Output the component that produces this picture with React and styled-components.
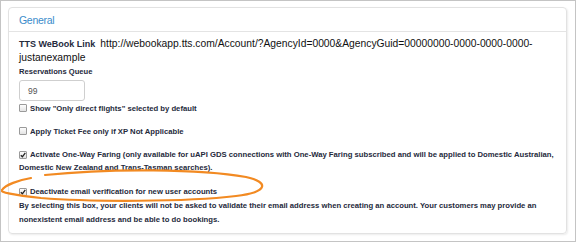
import React from 'react'
import styled, { createGlobalStyle } from 'styled-components'

const GlobalStyle = createGlobalStyle`
  html, body {
    margin: 0;
    padding: 0;
    background: #fff;
  }
  body {
    font-family: "Liberation Sans", Arial, sans-serif;
  }
`

const Frame = styled.div`
  position: relative;
  width: 576px;
  height: 242px;
  box-sizing: border-box;
  border: 1px solid #c4c4c4;
  padding: 6px 8px 7px 7px;
  overflow: hidden;
`

const Panel = styled.div`
  height: 100%;
  box-sizing: border-box;
  border: 1px solid #e2e2e2;
  border-radius: 4px;
  box-shadow: 1px 1px 2px rgba(0, 0, 0, 0.08);
  display: flex;
  flex-direction: column;
`

const Heading = styled.div`
  height: 24px;
  box-sizing: border-box;
  border-bottom: 1px solid #e4e4e4;
  padding-left: 10px;
  display: flex;
  align-items: center;
  color: #3a8ccb;
  font-size: 10.5px;
  letter-spacing: -0.3px;
`

const Body = styled.div`
  padding: 5px 3px 0 10px;
  color: #252a3c;
`

const LinkRow = styled.div`
  font-size: 10.3px;
  line-height: 13px;
  color: #111;
  width: 520px;
`

const LinkLabel = styled.b`
  font-size: 9px;
  color: #252a3c;
  margin-right: 5px;
`

const FieldLabel = styled.div`
  font-weight: bold;
  font-size: 7.6px;
  line-height: 12px;
  margin-top: 2px;
`

const Input = styled.div`
  width: 66px;
  height: 21px;
  box-sizing: border-box;
  margin-top: 2px;
  border: 1px solid #cfcfcf;
  border-radius: 3px;
  padding-left: 8px;
  display: flex;
  align-items: center;
  font-size: 8.5px;
  color: #555;
`

const CheckRow = styled.div`
  margin-top: ${p => p.gap}px;
  font-weight: bold;
  font-size: 7.7px;
  line-height: 13px;
`

const Box = styled.span`
  display: inline-flex;
  vertical-align: -1px;
  width: 8px;
  height: 8px;
  margin-right: 3px;
  box-sizing: border-box;
  border: 1px solid #9a9a9a;
  border-radius: 1px;
  background: linear-gradient(#fdfdfd, #e3e3e3);
  align-items: center;
  justify-content: center;
`

const Note = styled.div`
  font-weight: bold;
  font-size: 7.7px;
  line-height: 14px;
  margin-top: 1px;
  padding-right: 14px;
`

const Scribble = styled.svg`
  position: absolute;
  left: 0;
  top: 164px;
  pointer-events: none;
`

const Checkbox = ({ checked }) => (
  <Box>
    {checked && (
      <svg width="6" height="6" viewBox="0 0 6 6">
        <path d="M0.8 3.2 L2.4 4.8 L5.3 0.9" fill="none" stroke="#222" strokeWidth="1.3" />
      </svg>
    )}
  </Box>
)

const App = () => (
  <>
    <GlobalStyle />
    <Frame>
      <Panel>
        <Heading>General</Heading>
        <Body>
          <LinkRow>
            <LinkLabel>TTS WeBook Link</LinkLabel>
            http://webookapp.tts.com/Account/?AgencyId=0000&amp;AgencyGuid=00000000-0000-0000-0000-justanexample
          </LinkRow>
          <FieldLabel>Reservations Queue</FieldLabel>
          <Input>99</Input>
          <CheckRow gap={1}>
            <Checkbox />
            Show "Only direct flights" selected by default
          </CheckRow>
          <CheckRow gap={10}>
            <Checkbox />
            Apply Ticket Fee only if XP Not Applicable
          </CheckRow>
          <CheckRow gap={10}>
            <Checkbox checked />
            Activate One-Way Faring (only available for uAPI GDS connections with One-Way Faring subscribed and will be applied to Domestic Australian, Domestic New Zealand and Trans-Tasman searches).
          </CheckRow>
          <CheckRow gap={11}>
            <Checkbox checked />
            Deactivate email verification for new user accounts
          </CheckRow>
          <Note>
            By selecting this box, your clients will not be asked to validate their email address when creating an account. Your customers may provide an nonexistent email address and be able to do bookings.
          </Note>
        </Body>
      </Panel>
      <Scribble width="280" height="45" viewBox="0 0 280 45">
        <path
          d="M44 10 C110 3 200 4 245 12 C268 17 268 27 235 31 C185 37 90 37 40 33 C12 30 -2 27 1 25 C4 20 18 15 30 13"
          fill="none"
          stroke="#f28a22"
          strokeWidth="2.2"
          strokeLinecap="round"
        />
      </Scribble>
    </Frame>
  </>
)

export default App
